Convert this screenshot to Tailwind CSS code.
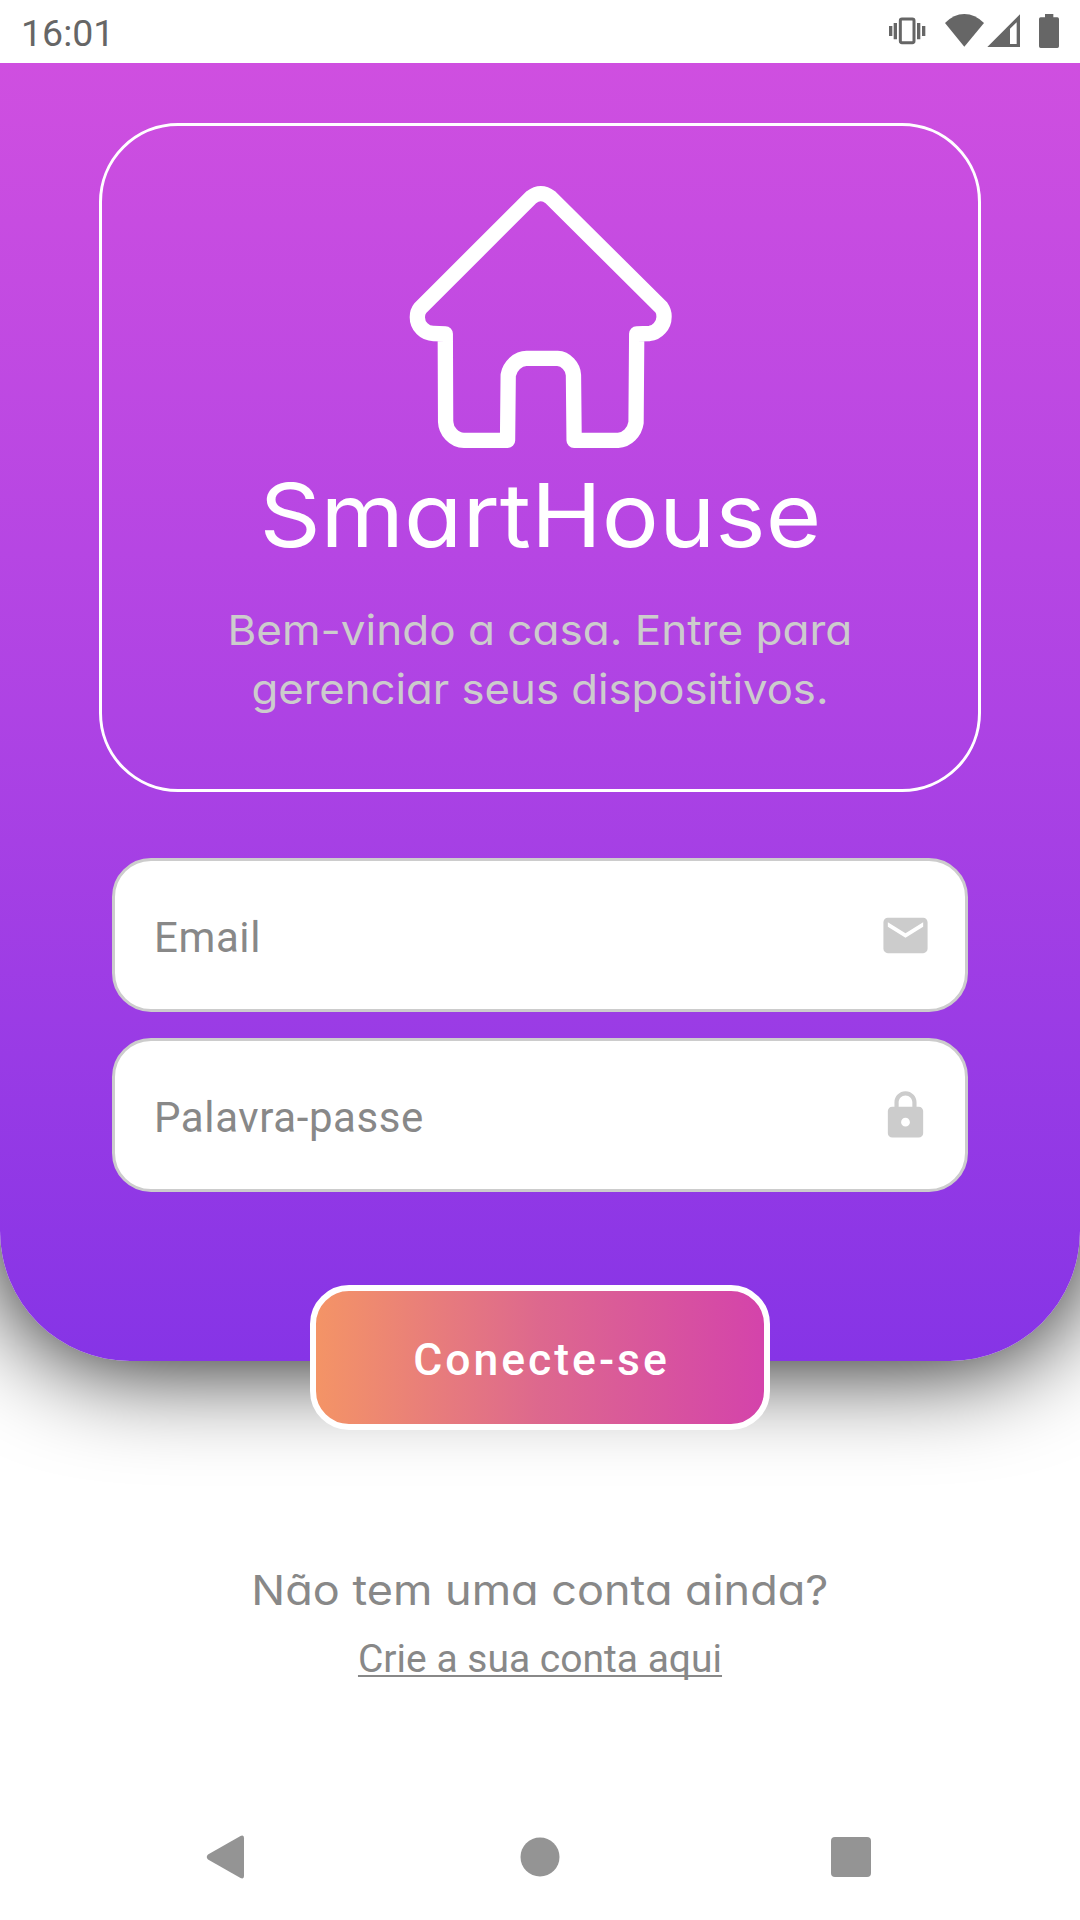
<!DOCTYPE html>
<html lang="pt">
<head>
<meta charset="utf-8">
<title>SmartHouse</title>
<script src="https://cdn.jsdelivr.net/npm/@tailwindcss/browser@4"></script>
</head>
<body class="bg-white">
<div class="w-[1080px] h-[1920px] flex flex-col overflow-hidden bg-white font-[Roboto,sans-serif]">
  <header class="relative z-10 h-[63px] shrink-0 bg-white flex items-start justify-between pl-[21px] text-[#666666]">
    <span class="text-[37.5px] leading-[40px] mt-[13px]">16:01</span>
    <svg class="w-[220px] h-[63px]" viewBox="0 0 660 189" fill="#666666">
      <rect x="121" y="57" width="41" height="71" rx="5" fill="none" stroke="#666666" stroke-width="9"/>
      <path d="M101 69h10v49h-10zM87 78h10v30h-10zM171 69h10v49h-10zM186 78h10v30h-10z"/>
      <path d="M255 69Q281 42 313 42T372 69L313 140Z"/>
      <path fill-rule="evenodd" d="M480 43V141H382ZM470 67L450 86V132H470Z"/>
      <path d="M555 42h25v10h12q5 0 5 5v82q0 5-5 5h-50q-5 0-5-5v-82q0-5 5-5h13z"/>
    </svg>
  </header>

  <main class="flex flex-col items-center">
    <section class="w-full h-[1298px] shrink-0 flex flex-col items-center pt-[60px] rounded-b-[130px] bg-linear-to-b/srgb from-[#cf4fe0] via-[#ae43e4] to-[#8634e6] shadow-[0_0_104px_#000000]">
      <div class="w-[882px] h-[669px] border-3 border-white rounded-[79px] flex flex-col items-center pt-[60px]">
        <svg class="w-[263px] h-[262px] shrink-0" viewBox="58 47 788 787" fill="none" stroke="#ffffff" stroke-width="46" stroke-linejoin="round">
          <path d="M424 81L91 414Q82 425 82 441C82 468 104 490 130 490L166 491L167 755C168 783 192 811 222 811H353L355 615C360 588 384 565 410 565H503C528 566 550 590 551 615L553 811H685C712 810 735 786 739 758L741 491L780 490C802 488 823 466 823 441Q824 425 815 412L482 81Q467 70 453 70T424 81Z"/>
        </svg>
        <h1 class="mt-[17px] text-[88px] leading-[100px] text-white whitespace-nowrap font-[Inter,sans-serif] [font-feature-settings:'cv11'] scale-x-[1.083]">SmartHouse</h1>
        <p class="mt-[36px] flex flex-col items-center text-[41px] leading-[59px] text-[#cccccc] whitespace-nowrap font-[Inter,sans-serif] [font-feature-settings:'cv11']">
          <span class="scale-x-[1.074]">Bem-vindo a casa. Entre para</span>
          <span class="scale-x-[1.065]">gerenciar seus dispositivos.</span>
        </p>
      </div>
      <form class="mt-[66px] flex flex-col gap-[26px]">
        <label class="w-[856px] h-[154px] flex items-center justify-between bg-white border-3 border-[#cccccc] rounded-[39px] pl-[39px] pr-[33px]">
          <span class="text-[42px] leading-[50px] pt-[5px] tracking-[0.6px] text-[#888888]">Email</span>
          <svg class="mt-px w-[53px] h-[53px]" viewBox="0 0 24 24" fill="#cccccc"><path d="M20 4H4c-1.100 0-2 .9-2 2v12c0 1.100.9 2 2 2h16c1.100 0 2-.9 2-2V6c0-1.100-.9-2-2-2zm0 4l-8 5-8-5V6l8 5 8-5v2z"/></svg>
        </label>
        <label class="w-[856px] h-[154px] flex items-center justify-between bg-white border-3 border-[#cccccc] rounded-[39px] pl-[39px] pr-[33px]">
          <span class="text-[42px] leading-[50px] pt-[5px] tracking-[0.6px] text-[#888888]">Palavra-passe</span>
          <svg class="mt-px w-[53px] h-[53px]" viewBox="0 0 24 24" fill="#cccccc"><path d="M18 8h-1V6c0-2.760-2.240-5-5-5S7 3.240 7 6v2H6c-1.100 0-2 .9-2 2v10c0 1.100.9 2 2 2h12c1.100 0 2-.9 2-2V10c0-1.100-.9-2-2-2zm-6 9c-1.100 0-2-.9-2-2s.9-2 2-2 2 .9 2 2-.9 2-2 2zm3.100-9H8.900V6c0-1.710 1.390-3.100 3.100-3.100s3.100 1.390 3.100 3.100v2z"/></svg>
        </label>
      </form>
    </section>
    <button class="relative -mt-[76px] w-[460px] h-[145px] rounded-[39px] border-6 border-white bg-linear-to-r/srgb from-[#f49466] via-[#dd688e] to-[#d443ab] text-white font-medium text-[44.500px] leading-[50px] tracking-[3px] pt-[5px] pl-[3px]">Conecte-se</button>
    <p class="mt-[130px] text-[41px] leading-[60px] text-[#888888] whitespace-nowrap font-[Inter,sans-serif] [font-feature-settings:'cv11'] scale-x-[1.098]">Não tem uma conta ainda?</p>
    <a class="mt-[14px] text-[39px] leading-[50px] text-[#888888] underline decoration-2 underline-offset-[3px] [text-decoration-skip-ink:none]">Crie a sua conta aqui</a>
  </main>

  <nav class="mt-auto h-[126px] shrink-0 flex items-center">
    <svg class="w-[1080px] h-[126px]" viewBox="0 1794 1080 126" fill="#949494">
      <path d="M208 1854.500L240.500 1836Q244 1834.500 244 1838.500V1875.500Q244 1879.500 240.500 1878L208 1859.500Q205.500 1857 208 1854.500Z"/>
      <circle cx="540" cy="1857" r="19.500"/>
      <rect x="831" y="1837" width="40" height="40" rx="4"/>
    </svg>
  </nav>
</div>
</body>
</html>
